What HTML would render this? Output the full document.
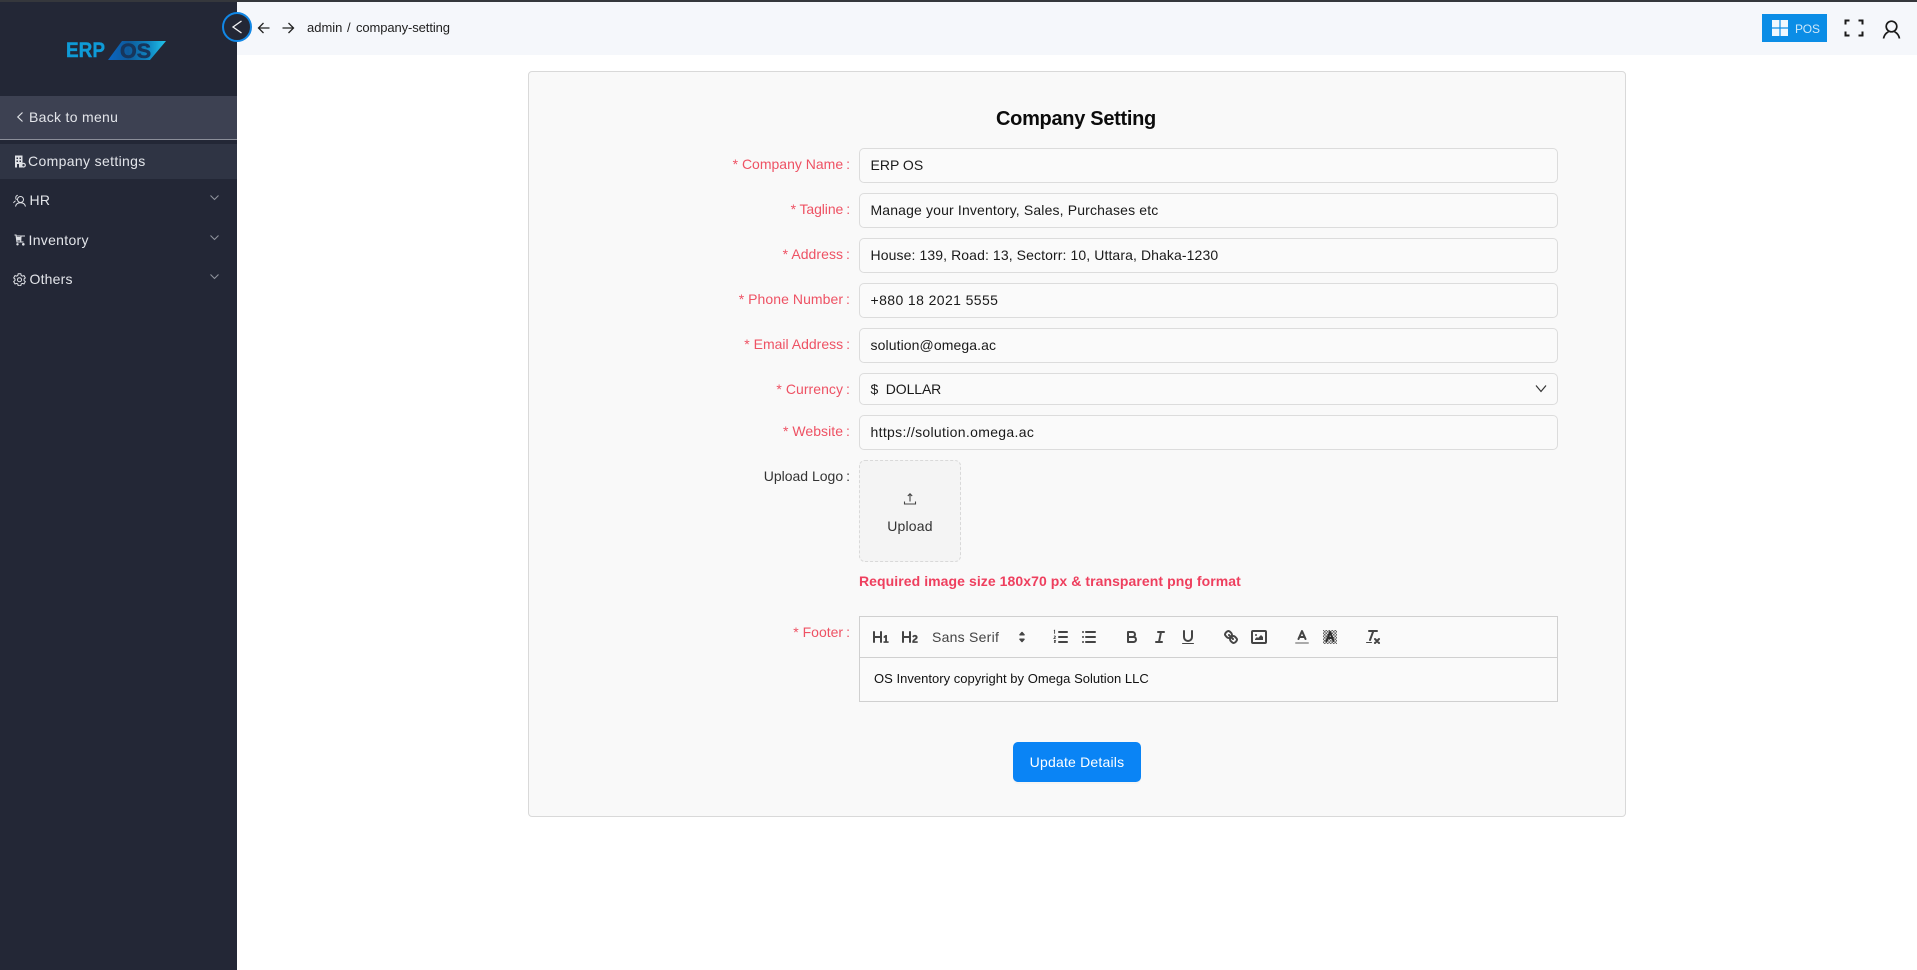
<!DOCTYPE html>
<html lang="en">
<head>
<meta charset="utf-8">
<title>Company Setting</title>
<style>
*{box-sizing:border-box}
html,body{margin:0;padding:0;width:1917px;height:970px;overflow:hidden;background:#fff;font-family:"Liberation Sans",sans-serif}
.a{position:absolute;white-space:nowrap}
.t{position:absolute;white-space:nowrap;line-height:20px;height:20px}
svg{position:absolute;display:block}
.side{color:#e3e5ea;font-size:14px;letter-spacing:.3px}
.lbl{color:#ee5264;font-size:14px;letter-spacing:0;right:1067px;text-align:right}
.lbl i{font-style:normal;margin-left:3px}
.inp{position:absolute;left:859px;width:699px;height:35px;background:#fafafa;border:1px solid #dcdcdc;border-radius:5px}
.val{color:#1a1a1a;font-size:14px;left:870.500px}
.q{fill:none;stroke:#444;stroke-width:2;stroke-linecap:round;stroke-linejoin:round}
.f{fill:#444;stroke:none}
</style>
</head>
<body>
<div class="a" style="left:0;top:0;width:1917px;height:2px;background:#35373c"></div>
<div class="a" style="left:237px;top:2px;width:1680px;height:53px;background:#f5f7fb"></div>
<div class="a" style="left:0;top:2px;width:237px;height:968px;background:#232736"></div>

<!-- logo -->
<svg style="left:60px;top:36px" width="110" height="30" viewBox="60 36 110 30">
<defs><linearGradient id="lg" x1="0" x2="1" y1="0" y2="0"><stop offset="0" stop-color="#0a66c4"/><stop offset=".35" stop-color="#0e5a9a"/><stop offset=".7" stop-color="#0f86c2"/><stop offset="1" stop-color="#22c4ea"/></linearGradient></defs>
<text x="66" y="57" font-family="Liberation Sans" font-weight="700" font-size="21" fill="#0f9bd7" stroke="#0f9bd7" stroke-width=".4" textLength="39" lengthAdjust="spacingAndGlyphs">ERP</text>
<polygon points="122,41 166,41 150,60 108,60" fill="url(#lg)"/>
<text x="120" y="58" font-family="Liberation Sans" font-weight="700" font-size="21" fill="#17365c" stroke="#17365c" stroke-width=".6" textLength="31" lengthAdjust="spacingAndGlyphs">OS</text>
</svg>

<!-- sidebar rows -->
<div class="a" style="left:0;top:96px;width:237px;height:44px;background:#3d4152;border-bottom:1px solid #8b8e99"></div>
<div class="a" style="left:0;top:144px;width:237px;height:35px;background:#2f3444"></div>

<svg style="left:14px;top:110px" width="12" height="14" viewBox="0 0 12 14"><path d="M8.500 2.500 L3.800 7 L8.500 11.500" fill="none" stroke="#dfe1e6" stroke-width="1.200"/></svg>
<div class="t side" style="left:29px;top:107px">Back to menu</div>

<svg style="left:14px;top:155px" width="12" height="13" viewBox="0 0 12 13"><path d="M1 .5h7.500v12H1z" fill="#dfe1e6"/><path d="M2.500 2.500h1.500v1.500H2.500zM5.500 2.500H7V4H5.500zM2.500 5.500H4V7H2.500zM5.500 5.500H7V7H5.500zM3 9h2v3.500H3z" fill="#2f3444"/><circle cx="9.500" cy="10.200" r="1.800" fill="#2f3444" stroke="#dfe1e6" stroke-width="1.200"/></svg>
<div class="t side" style="left:28px;top:151px;letter-spacing:.35px">Company settings</div>

<svg style="left:13px;top:194px" width="13" height="13" viewBox="0 0 13 13"><g fill="none" stroke="#dfe1e6" stroke-width="1"><circle cx="7.500" cy="5.500" r="3"/><path d="M2.500 12.500c.4-2.500 2.300-3.800 5-3.800s4.500 1.300 5 3.800M4.800 1.200C3.300 1.500 2.500 2.800 2.800 4.300c.1.600.4 1.100.8 1.500M.5 9c.4-1 1.100-1.800 2.100-2.200"/></g></svg>
<div class="t side" style="left:29.500px;top:190px">HR</div>

<svg style="left:14px;top:234px" width="12" height="12" viewBox="0 0 12 12"><path d="M.5 1h1.500l1 7h6.500M2.500 2h8.500M7 2l-.3 6" fill="none" stroke="#dfe1e6" stroke-width="1.100"/><path d="M2.500 3h4v3.500h-4z" fill="#dfe1e6"/><circle cx="3.500" cy="10.300" r="1.200" fill="#dfe1e6"/><circle cx="9.300" cy="10.300" r="1.300" fill="#dfe1e6"/></svg>
<div class="t side" style="left:28.500px;top:230px">Inventory</div>

<svg style="left:13px;top:273px" width="13" height="13" viewBox="0 0 13 13"><path d="M5.200.8h2.600l.4 1.700 1.100.6 1.700-.5 1.300 2.300-1.300 1.200v1.300l1.300 1.200-1.300 2.300-1.700-.5-1.100.6-.4 1.700H5.200l-.4-1.700-1.100-.6-1.700.5L.7 8.600 2 7.400V6.100L.7 4.900 2 2.600l1.700.5 1.100-.6z" fill="none" stroke="#dfe1e6" stroke-width="1"/><circle cx="6.500" cy="6.700" r="2" fill="none" stroke="#dfe1e6" stroke-width="1"/></svg>
<div class="t side" style="left:29.500px;top:269px;letter-spacing:.2px">Others</div>

<svg style="left:209px;top:194px" width="11" height="8" viewBox="0 0 11 8"><path d="M1.500 1.500 5.500 5.500 9.500 1.500" fill="none" stroke="#8f929c" stroke-width="1.100"/></svg>
<svg style="left:209px;top:234px" width="11" height="8" viewBox="0 0 11 8"><path d="M1.500 1.500 5.500 5.500 9.500 1.500" fill="none" stroke="#8f929c" stroke-width="1.100"/></svg>
<svg style="left:209px;top:273px" width="11" height="8" viewBox="0 0 11 8"><path d="M1.500 1.500 5.500 5.500 9.500 1.500" fill="none" stroke="#8f929c" stroke-width="1.100"/></svg>

<!-- topbar -->
<div class="a" style="left:222px;top:12px;width:30px;height:30px;border-radius:50%;background:#232736;border:2px solid #1187e6"></div>
<svg style="left:230px;top:19px" width="14" height="16" viewBox="0 0 14 16"><path d="M11.500 2 3 8l8.500 6" fill="none" stroke="#f2f3f5" stroke-width="1.300"/></svg>
<svg style="left:257px;top:21px" width="14" height="14" viewBox="0 0 14 14"><path d="M12.500 7h-11M6.500 2 1.500 7l5 5" fill="none" stroke="#222" stroke-width="1.300"/></svg>
<svg style="left:281px;top:21px" width="14" height="14" viewBox="0 0 14 14"><path d="M1.500 7h11M7.500 2l5 5-5 5" fill="none" stroke="#222" stroke-width="1.300"/></svg>
<div class="t" style="left:307px;top:18px;font-size:13px;color:#222">admin</div>
<div class="t" style="left:347px;top:18px;font-size:13px;color:#222">/</div>
<div class="t" style="left:356px;top:18px;font-size:13px;color:#222;letter-spacing:-.1px">company-setting</div>

<div class="a" style="left:1762px;top:14px;width:65px;height:28px;background:#0b8de6"></div>
<svg style="left:1772px;top:20px" width="16" height="16" viewBox="0 0 16 16"><path d="M0 0h7.400v7.400H0zM8.600 0H16v7.400H8.600zM0 8.600h7.400V16H0zM8.600 8.600H16V16H8.600z" fill="#f0f8fe"/></svg>
<div class="t" style="left:1795px;top:18.500px;font-size:12px;color:#cfe8fa;letter-spacing:-.2px">POS</div>
<svg style="left:1844px;top:19px" width="20" height="18" viewBox="0 0 20 18"><path d="M1.500 5.500V1.500H5.500M14.500 1.500H18.500V5.500M18.500 12.500V16.500H14.500M5.500 16.500H1.500V12.500" fill="none" stroke="#1a1a1a" stroke-width="2"/></svg>
<svg style="left:1882px;top:20px" width="19" height="19" viewBox="0 0 19 19"><circle cx="9.500" cy="6.500" r="5.300" fill="none" stroke="#1a1a1a" stroke-width="1.700"/><path d="M1.500 18.500c.7-3.600 3-5.800 5-6.800M17.500 18.500c-.7-3.600-3-5.800-5-6.800" fill="none" stroke="#1a1a1a" stroke-width="1.700"/></svg>

<!-- card -->
<div class="a" style="left:528px;top:71px;width:1098px;height:746px;background:#f9f9f9;border:1px solid #d9d9d9;border-radius:4px"></div>
<div class="t" style="left:876px;width:400px;text-align:center;top:109px;font-size:20px;font-weight:700;color:#0c0c0c;letter-spacing:-.3px">Company Setting</div>

<div class="t lbl" style="top:154px">* Company Name<i>:</i></div>
<div class="inp" style="top:148px"></div>
<div class="t val" style="top:155px;letter-spacing:0">ERP OS</div>

<div class="t lbl" style="top:199px;letter-spacing:-.1px">* Tagline<i>:</i></div>
<div class="inp" style="top:193px"></div>
<div class="t val" style="top:200px;letter-spacing:.15px">Manage your Inventory, Sales, Purchases etc</div>

<div class="t lbl" style="top:244px;letter-spacing:.05px">* Address<i>:</i></div>
<div class="inp" style="top:238px"></div>
<div class="t val" style="top:245px;letter-spacing:.1px">House: 139, Road: 13, Sectorr: 10, Uttara, Dhaka-1230</div>

<div class="t lbl" style="top:289px;letter-spacing:.06px">* Phone Number<i>:</i></div>
<div class="inp" style="top:283px"></div>
<div class="t val" style="top:290px;letter-spacing:.4px">+880 18 2021 5555</div>

<div class="t lbl" style="top:334px">* Email Address<i>:</i></div>
<div class="inp" style="top:328px"></div>
<div class="t val" style="top:335px;letter-spacing:.1px">solution@omega.ac</div>

<div class="t lbl" style="top:379px;letter-spacing:.05px">* Currency<i>:</i></div>
<div class="inp" style="top:373px;height:32px"></div>
<div class="t val" style="top:379px;letter-spacing:-.1px">$&nbsp;&nbsp;DOLLAR</div>
<svg style="left:1535px;top:384px" width="12" height="10" viewBox="0 0 12 10"><path d="M1 1.500 6 7.500 11 1.500" fill="none" stroke="#333" stroke-width="1.200"/></svg>

<div class="t lbl" style="top:421px;letter-spacing:.05px">* Website<i>:</i></div>
<div class="inp" style="top:415px"></div>
<div class="t val" style="top:422px;letter-spacing:.32px">https://solution.omega.ac</div>

<div class="t lbl" style="top:466px;color:#333">Upload Logo<i>:</i></div>
<div class="a" style="left:859px;top:460px;width:102px;height:102px;background:#f4f4f4;border:1px dashed #d9d9d9;border-radius:6px"></div>
<svg style="left:903px;top:492px" width="14" height="14" viewBox="0 0 14 14"><path d="M7 9.500V2M4.800 4 7 1.800 9.200 4M1.500 9.500v2.500h11V9.500" fill="none" stroke="#444" stroke-width="1.100"/></svg>
<div class="t" style="left:859px;width:102px;text-align:center;top:516px;font-size:14px;color:#333;letter-spacing:.2px">Upload</div>

<div class="t" style="left:859px;top:571px;font-size:14px;font-weight:700;color:#ee3f5e;letter-spacing:.07px">Required image size 180x70 px &amp; transparent png format</div>

<div class="t lbl" style="top:622px">* Footer<i>:</i></div>
<div class="a" style="left:859px;top:616px;width:699px;height:86px;background:#fafafa;border:1px solid #d0d0d0"></div>
<div class="a" style="left:859px;top:657px;width:699px;height:1px;background:#d0d0d0"></div>

<!-- quill toolbar -->
<svg style="left:872px;top:628px" width="18" height="18" viewBox="0 0 18 18"><path class="f" d="M10,4V14a1,1,0,0,1-2,0V10H3v4a1,1,0,0,1-2,0V4A1,1,0,0,1,3,4V8H8V4a1,1,0,0,1,2,0Zm6.06787,9.209H14.98975V7.59863a.54085.54085,0,0,0-.605-.60547h-.62744a1.01119,1.01119,0,0,0-.748.29688L11.645,8.56641a.5435.5435,0,0,0-.022.8584l.28613.30762a.53861.53861,0,0,0,.84717.0332l.09912-.08789a1.2137,1.2137,0,0,0,.2417-.35254h.02246s-.01123.30859-.01123.60547V13.209H12.041a.54085.54085,0,0,0-.605.60547v.43945a.54085.54085,0,0,0,.605.60547h4.02686a.54085.54085,0,0,0,.605-.60547v-.43945A.54085.54085,0,0,0,16.06787,13.209Z"/></svg>
<svg style="left:901px;top:628px" width="18" height="18" viewBox="0 0 18 18"><path class="f" d="M16.73975,13.81445v.43945a.54085.54085,0,0,1-.605.60547H11.855a.58392.58392,0,0,1-.64893-.60547V14.0127c0-2.90527,3.39941-3.42187,3.39941-4.55469a.77675.77675,0,0,0-.84717-.78125,1.17684,1.17684,0,0,0-.83594.38477c-.2749.26367-.561.374-.85791.13184l-.4292-.34082c-.30811-.24219-.38525-.51758-.1543-.81445a2.97155,2.97155,0,0,1,2.45361-1.17676,2.45393,2.45393,0,0,1,2.68408,2.40918c0,2.45312-3.1792,2.92676-3.27832,3.93848h2.79443A.54085.54085,0,0,1,16.73975,13.81445ZM9,3A.99974.99974,0,0,0,8,4V8H3V4A1,1,0,0,0,1,4V14a1,1,0,0,0,2,0V10H8v4a1,1,0,0,0,2,0V4A.99974.99974,0,0,0,9,3Z"/></svg>
<div class="t" style="left:932px;top:627px;font-size:14px;color:#444;letter-spacing:.25px">Sans Serif</div>
<svg style="left:1013px;top:628px" width="18" height="18" viewBox="0 0 18 18"><path d="M9 4.500 11 6.800H7zM9 13.500 7 11.200H11z" fill="#444" stroke="#444" stroke-width="1.500" stroke-linejoin="round"/></svg>

<svg style="left:1052px;top:628px" width="18" height="18" viewBox="0 0 18 18"><path class="q" d="M7 4H15M7 9H15M7 14H15"/><path d="M2.600 5.800V2.300L1.900 2.700M2 8.300c1-.7 1.600-.1 1.300.6L2 10.400h1.600M2 12.400h1.400l-.8 1 .5.100c.6.300.3 1.300-1.100 1" fill="none" stroke="#444" stroke-width=".9"/></svg>
<svg style="left:1080px;top:628px" width="18" height="18" viewBox="0 0 18 18"><path class="q" d="M6 4H15M6 9H15M6 14H15M3 4H3M3 9H3M3 14H3"/></svg>

<svg style="left:1123px;top:628px" width="18" height="18" viewBox="0 0 18 18"><path class="q" d="M5,4H9.500A2.500,2.500,0,0,1,12,6.500v0A2.500,2.500,0,0,1,9.500,9H5A0,0,0,0,1,5,9V4A0,0,0,0,1,5,4Z"/><path class="q" d="M5,9h5.500A2.500,2.500,0,0,1,13,11.500v0A2.500,2.500,0,0,1,10.500,14H5a0,0,0,0,1,0,0V9A0,0,0,0,1,5,9Z"/></svg>
<svg style="left:1151px;top:628px" width="18" height="18" viewBox="0 0 18 18"><path class="q" d="M7 4H13M5 14H11M8 14 10 4"/></svg>
<svg style="left:1179px;top:628px" width="18" height="18" viewBox="0 0 18 18"><path class="q" d="M5,3V9a4.006,4.006,0,0,0,4,4H9a4.006,4.006,0,0,0,4-4V3"/><rect class="f" x="3" y="15" width="12" height="1" rx=".5"/></svg>

<svg style="left:1222px;top:628px" width="18" height="18" viewBox="0 0 18 18"><path class="q" d="M7 7 11 11"/><path class="q" d="M8.900,4.577a3.476,3.476,0,0,1,.36,4.679A3.476,3.476,0,0,1,4.577,8.900C3.185,7.500,2.035,6.400,4.217,4.217S7.500,3.185,8.900,4.577Z"/><path class="q" d="M13.423,9.100a3.476,3.476,0,0,0-4.679-.36,3.476,3.476,0,0,0,.36,4.679c1.392,1.392,2.500,2.542,4.679.36S14.815,10.500,13.423,9.100Z"/></svg>
<svg style="left:1250px;top:628px" width="18" height="18" viewBox="0 0 18 18"><rect class="q" x="2" y="3" width="14" height="12" rx="1"/><circle class="f" cx="6" cy="7" r="1"/><polygon class="f" points="5 12 5 11 7 9 8 10 11 7 13 9 13 12 5 12"/></svg>

<svg style="left:1293px;top:628px" width="18" height="18" viewBox="0 0 18 18"><path d="M3 15H15" stroke="#aaa" stroke-width="2" stroke-linecap="round"/><path class="q" d="M5.500 11 9 3 12.500 11M11.630 9H6.370"/></svg>
<svg style="left:1321px;top:628px" width="18" height="18" viewBox="0 0 18 18"><defs><pattern id="dots" width="3" height="3" patternUnits="userSpaceOnUse"><rect width="1.500" height="1.500" fill="#666"/><rect x="1.500" y="1.500" width="1.500" height="1.500" fill="#666"/></pattern></defs><rect x="2" y="2" width="14" height="14" fill="#e4e4e4"/><rect x="2" y="2" width="14" height="14" fill="url(#dots)"/><path d="M5.500 13 9 4 12.500 13M11.630 10H6.370" fill="none" stroke="#2e2e2e" stroke-width="2" stroke-linecap="round" stroke-linejoin="round"/></svg>

<svg style="left:1364px;top:628px" width="18" height="18" viewBox="0 0 18 18"><path class="q" d="M5 3H13M6 12 9.350 3M11 11 15 15M15 11 11 15"/><rect class="f" x="2" y="14" width="6" height="1" rx=".5"/></svg>

<div class="t" style="left:874px;top:669px;font-size:13px;color:#111;letter-spacing:.02px">OS Inventory copyright by Omega Solution LLC</div>

<div class="a" style="left:1013px;top:742px;width:128px;height:40px;background:#0a84f5;border-radius:5px;box-shadow:0 2px 0 rgba(0,0,0,.02)"></div>
<div class="t" style="left:1013px;width:128px;text-align:center;top:752px;font-size:14px;color:#fff;letter-spacing:.2px">Update Details</div>
</body>
</html>
